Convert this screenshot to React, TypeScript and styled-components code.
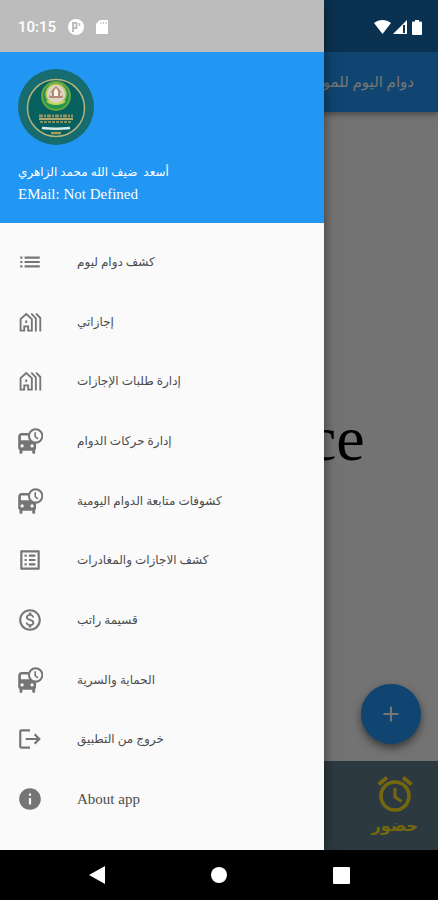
import React from 'react';
import styled, { createGlobalStyle } from 'styled-components';
import {
  MdAdd,
  MdInfo,
  MdList,
  MdListAlt,
  MdLogout,
  MdOutlineMonetizationOn,
} from 'react-icons/md';

const GlobalStyle = createGlobalStyle`
  *, *::before, *::after { box-sizing: border-box; }
  body {
    margin: 0;
    background: #000;
    font-family: "Liberation Serif", "DejaVu Sans", serif;
  }
  button { font: inherit; border: 0; padding: 0; background: none; cursor: pointer; }
`;

const Device = styled.div`
  display: flex;
  flex-direction: column;
  min-height: 100vh;
`;

const Stage = styled.div`
  position: relative;
  display: flex;
  flex: 1;
  overflow: hidden;
`;

const Page = styled.div`
  display: flex;
  flex: 1;
  flex-direction: column;
  background: #fafafa;
`;

const AppBar = styled.header`
  padding-top: 52px;
  background: linear-gradient(#1a6cae 52px, #2196f3 52px);
  box-shadow: 0 2px 6px rgba(0, 0, 0, 0.4);
`;

const Title = styled.h1`
  margin: 0;
  padding: 0 24px;
  font-size: 15px;
  font-weight: 400;
  line-height: 60px;
  color: #fff;
  white-space: nowrap;
`;

const Content = styled.main`
  display: flex;
  flex: 1;
  flex-direction: column;
  align-items: center;
  justify-content: center;
  padding-top: 4px;
  font-size: 64px;
  line-height: 72px;
  color: #000;
`;

const AddButton = styled.button`
  position: absolute;
  right: 17px;
  bottom: 106px;
  display: grid;
  place-items: center;
  width: 60px;
  height: 60px;
  border-radius: 50%;
  background: #2196f3;
  color: #fff;
  font-size: 26px;
  box-shadow: 0 4px 8px rgba(0, 0, 0, 0.5);
`;

const BottomBar = styled.footer`
  display: flex;
  justify-content: flex-end;
  height: 89px;
  padding: 0 20px;
  background: #607d8b;
`;

const AttendButton = styled.button`
  display: flex;
  flex-direction: column;
  align-items: center;
  justify-content: center;
  color: #ffe01e;
  font-size: 16px;
  font-weight: 700;
  line-height: 24px;

  svg { width: 40px; height: 40px; }
`;

const Scrim = styled.div`
  position: absolute;
  inset: 0;
  background: rgba(0, 0, 0, 0.54);
`;

const Drawer = styled.aside`
  position: absolute;
  inset: 0 auto 0 0;
  display: flex;
  flex-direction: column;
  width: 74%;
  background: #fafafa;
  box-shadow: 0 0 12px rgba(0, 0, 0, 0.5);
`;

const Account = styled.div`
  padding: 69px 18px 18px;
  background: linear-gradient(#bcbcbc 52px, #2196f3 52px);
  color: #fff;
`;

const Emblem = styled.svg`
  display: block;
  width: 76px;
  height: 76px;
  margin-bottom: 16px;
`;

const AccountName = styled.div`
  font-size: 12px;
  line-height: 22px;
  white-space: pre;
`;

const AccountMail = styled.div`
  font-size: 15px;
  line-height: 22px;
`;

const Menu = styled.nav`
  display: grid;
  flex: 1;
  grid-auto-rows: 1fr;
  padding: 9px 0 21px;
`;

const MenuItem = styled.button<{ $latin?: boolean }>`
  display: flex;
  align-items: center;
  gap: 34px;
  min-height: 52px;
  padding: 0 17px;
  font-size: ${(p) => (p.$latin ? 15 : 12)}px;
  line-height: 20px;
  color: #4c4c4c;
  text-align: left;

  svg { flex: none; width: 26px; height: 26px; color: #757575; }
`;

const StatusBar = styled.div`
  position: absolute;
  inset: 0 0 auto 0;
  display: flex;
  align-items: center;
  height: 54px;
  padding: 0 15px 0 18px;
  color: #fff;
  font: 500 15px/20px Roboto, sans-serif;
`;

const StatusGroup = styled.div<{ $gap: number; $end?: boolean }>`
  display: flex;
  align-items: center;
  gap: ${(p) => p.$gap}px;
  margin-left: ${(p) => (p.$end ? 'auto' : '0')};
`;

const SystemNav = styled.nav`
  display: grid;
  grid-template-columns: repeat(3, 1fr);
  height: 50px;
  padding: 0 36px;
  background: #000;
`;

const SystemButton = styled.button`
  display: grid;
  place-items: center;
`;

const Alarm = () => (
  <svg viewBox="0 0 40 40" fill="none" stroke="currentColor" aria-hidden="true">
    <circle cx="20" cy="22" r="14" strokeWidth="3.600" />
    <path d="M3.500 10.500l8.500-7M36.500 10.500l-8.500-7" strokeWidth="3.800" />
    <path d="M20 14v9l6.500 4.500" strokeWidth="3" />
  </svg>
);

const BusClock = () => (
  <svg viewBox="0 0 24 24" fill="currentColor" aria-hidden="true">
    <path
      fillRule="evenodd"
      d="M4.500 4.500H11c-.5 1-.6 1.800-.5 2.500H3.600v4.300h8.400c1.300 1.400 3.200 2.200 5.600 2.100V18.500c0 .7-.3 1.300-.8 1.700V23c0 .4-.3.700-.7.700h-1.300c-.4 0-.7-.3-.7-.7V21H5v2c0 .4-.3.700-.7.700H3c-.4 0-.7-.3-.7-.7v-2.800C1.500 19.700 1.100 19.200 1.100 18.500V8c0-2.300 1.300-3.500 3.400-3.500zM4.700 15a1.500 1.500 0 1 0 0 3 1.500 1.500 0 0 0 0-3zm9.200 0a1.500 1.500 0 1 0 0 3 1.500 1.500 0 0 0 0-3z"
    />
    <circle cx="17.200" cy="7.300" r="6.200" fill="#fafafa" stroke="currentColor" strokeWidth="1.900" />
    <path d="M16.800 4v4l2.600 2" fill="none" stroke="currentColor" strokeWidth="1.500" />
  </svg>
);

const Village = () => (
  <svg viewBox="0 0 24 24" fill="none" stroke="currentColor" strokeWidth="1.700" aria-hidden="true">
    <path d="M3.300 20V9.400L8.500 4.600l5.200 4.800V20H10.300v-4H6.700v4z" />
    <path d="M13.200 4.300l4.200 4.400V20.800M17.600 4.300l3.900 4V20.800" />
    <path d="M8.500 10.500v2.500" />
  </svg>
);

const Logo = () => (
  <Emblem viewBox="0 0 76 76" role="img" aria-label="Emblem">
    <circle cx="38" cy="38" r="38" fill="#176c70" />
    <circle cx="38" cy="39" r="28.500" fill="#05605f" stroke="#b5b27a" strokeWidth="1.500" />
    <circle cx="38" cy="27" r="14" fill="#239553" stroke="#69a83f" strokeWidth="2" />
    <circle cx="38" cy="25" r="10" fill="#dcd7c4" stroke="#b3c24c" strokeWidth="1.500" />
    <path d="M31 29c0-4 2-5 3-8l4-4 4 4c1 3 3 4 3 8z" fill="#b48a76" />
    <path d="M36 27v-5l2-3 2 3v5z" fill="#fbf8f0" />
    <path d="M33 27v-3M43 27v-3" stroke="#f0e6dc" strokeWidth="1.500" />
    <path d="M29 32c5 4 13 4 18 0" fill="none" stroke="#c5d65a" strokeWidth="2" />
    <path d="M21 47h34" stroke="#8f9565" strokeWidth="3" strokeDasharray="4 1 2 1" />
    <path d="M21 50h34" stroke="#aaa66c" strokeWidth="2" />
    <path d="M22 53h32" stroke="#7f8f62" strokeWidth="2" strokeDasharray="3 1" />
    <path d="M24 59c9 1 19 1 28 0" fill="none" stroke="#d6ebe8" strokeWidth="2.500" />
    <path d="M33 64h10" stroke="#a39c5e" strokeWidth="2.500" />
  </Emblem>
);

const items: { label: string; icon: React.ReactNode; latin?: boolean }[] = [
  { label: 'كشف دوام ليوم', icon: <MdList /> },
  { label: 'إجازاتي', icon: <Village /> },
  { label: 'إدارة طلبات الإجازات', icon: <Village /> },
  { label: 'إدارة حركات الدوام', icon: <BusClock /> },
  { label: 'كشوفات متابعة الدوام اليومية', icon: <BusClock /> },
  { label: 'كشف الاجازات والمغادرات', icon: <MdListAlt /> },
  { label: 'قسيمة راتب', icon: <MdOutlineMonetizationOn /> },
  { label: 'الحماية والسرية', icon: <BusClock /> },
  { label: 'خروج من التطبيق', icon: <MdLogout /> },
  { label: 'About app', icon: <MdInfo />, latin: true },
];

export default function App() {
  return (
    <Device>
      <GlobalStyle />
      <Stage>
        <Page>
          <AppBar>
            <Title dir="rtl">دوام اليوم للموظفين</Title>
          </AppBar>
          <Content>Attendance</Content>
          <BottomBar>
            <AttendButton>
              <Alarm />
              حضور
            </AttendButton>
          </BottomBar>
          <AddButton aria-label="Add">
            <MdAdd />
          </AddButton>
        </Page>
        <Scrim />
        <Drawer>
          <Account>
            <Logo />
            <AccountName>أسعد  ضيف الله محمد الزاهري</AccountName>
            <AccountMail>EMail: Not Defined</AccountMail>
          </Account>
          <Menu>
            {items.map((item) => (
              <MenuItem key={item.label} $latin={item.latin}>
                {item.icon}
                <span>{item.label}</span>
              </MenuItem>
            ))}
          </Menu>
        </Drawer>
        <StatusBar>
          <StatusGroup $gap={12}>
            <span>10:15</span>
            <svg width="16" height="16" viewBox="0 0 16 16" aria-hidden="true">
              <circle cx="8" cy="8" r="8" fill="#fff" />
              <path d="M5 13V4h3.500v5H6" fill="none" stroke="#bcbcbc" strokeWidth="2" />
              <path d="M11.500 4v3" stroke="#bcbcbc" strokeWidth="1.500" />
            </svg>
            <svg width="12" height="14" viewBox="0 0 12 14" aria-hidden="true">
              <path d="M4 0h7a1 1 0 0 1 1 1v12a1 1 0 0 1-1 1H1a1 1 0 0 1-1-1V4z" fill="#fff" />
              <path d="M5 2v2M7.500 2v2M10 2v2" stroke="#bcbcbc" />
            </svg>
          </StatusGroup>
          <StatusGroup $gap={2} $end>
            <svg width="17" height="14" viewBox="0 0 17 14" aria-hidden="true">
              <path d="M0 3C5-1 12-1 17 3L8.500 14z" fill="#fff" />
            </svg>
            <svg width="14" height="14" viewBox="0 0 14 14" aria-hidden="true">
              <path d="M14 0v14H0z" fill="#fff" />
              <path d="M11 5v8" stroke="#0c3250" strokeWidth="2" />
            </svg>
            <svg width="14" height="15" viewBox="0 0 14 15" aria-hidden="true">
              <path d="M6 0h4v1.500h2a1 1 0 0 1 1 1V14a1 1 0 0 1-1 1H4a1 1 0 0 1-1-1V2.500a1 1 0 0 1 1-1h2z" fill="#fff" />
            </svg>
          </StatusGroup>
        </StatusBar>
      </Stage>
      <SystemNav aria-label="System">
        <SystemButton aria-label="Back">
          <svg width="18" height="18" viewBox="0 0 18 18">
            <path d="M17 0v18L1 9z" fill="#fff" />
          </svg>
        </SystemButton>
        <SystemButton aria-label="Home">
          <svg width="16" height="16" viewBox="0 0 16 16">
            <circle cx="8" cy="8" r="8" fill="#fff" />
          </svg>
        </SystemButton>
        <SystemButton aria-label="Recent apps">
          <svg width="17" height="17" viewBox="0 0 17 17">
            <rect width="17" height="17" rx="1" fill="#fff" />
          </svg>
        </SystemButton>
      </SystemNav>
    </Device>
  );
}
